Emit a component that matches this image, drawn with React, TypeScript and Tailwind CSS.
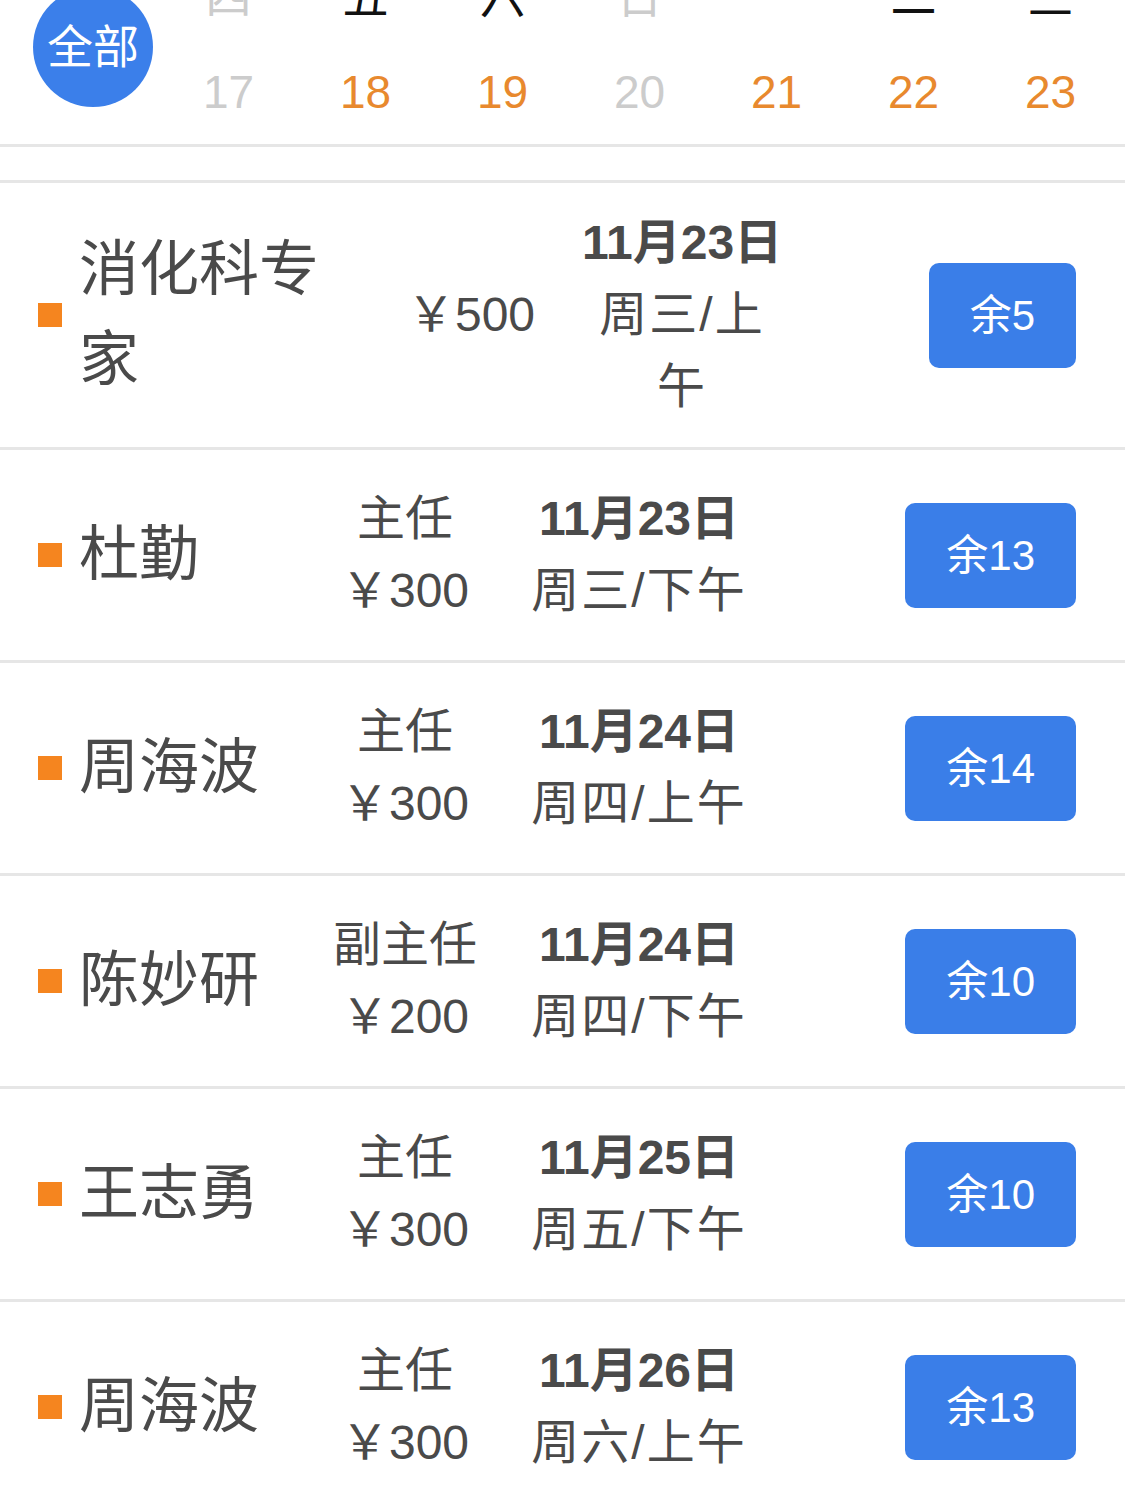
import React from 'react';

// ─── data ─────────────────────────────────────────────────────────────────────

type Day = { week: string; date: string; active: boolean };

const days: Day[] = [
  { week: '四', date: '17', active: false },
  { week: '五', date: '18', active: true },
  { week: '六', date: '19', active: true },
  { week: '日', date: '20', active: false },
  { week: '一', date: '21', active: true },
  { week: '二', date: '22', active: true },
  { week: '三', date: '23', active: true },
];

type Slot = {
  name: string;
  title?: string;
  price: string;
  date: string;
  time: string;
  left: number;
};

const slots: Slot[] = [
  { name: '消化科专家', price: '500', date: '11月23日', time: '周三/上午', left: 5 },
  { name: '杜勤', title: '主任', price: '300', date: '11月23日', time: '周三/下午', left: 13 },
  { name: '周海波', title: '主任', price: '300', date: '11月24日', time: '周四/上午', left: 14 },
  { name: '陈妙研', title: '副主任', price: '200', date: '11月24日', time: '周四/下午', left: 10 },
  { name: '王志勇', title: '主任', price: '300', date: '11月25日', time: '周五/下午', left: 10 },
  { name: '周海波', title: '主任', price: '300', date: '11月26日', time: '周六/上午', left: 13 },
];

const font = { fontFamily: '"Liberation Sans", "Noto Sans CJK SC", sans-serif' };

// ─── components ───────────────────────────────────────────────────────────────

function DayBar() {
  return (
    <div className="h-[147px] overflow-hidden border-b-[3px] border-[#e6e6e6] bg-white">
      <div className="flex items-start -mt-[33px]">
        <div className="ml-[33px] mt-[20px] w-[120px] h-[120px] rounded-full bg-[#3b7fea] flex items-center justify-center text-white text-[46px] shrink-0">
          全部
        </div>
        <div className="ml-[7px] flex">
          {days.map(d => (
            <div key={d.date} className="w-[137px] flex flex-col items-center">
              <div className={`text-[46px] leading-[60px] ${d.active ? 'text-[#111]' : 'text-[#cccccc]'}`}>
                {d.week}
              </div>
              <div className={`mt-[35px] text-[46px] leading-[60px] ${d.active ? 'text-[#e8892e]' : 'text-[#cccccc]'}`}>
                {d.date}
              </div>
            </div>
          ))}
        </div>
      </div>
    </div>
  );
}

function SlotRow({ slot, first }: { slot: Slot; first: boolean }) {
  return (
    <div className="flex items-center min-h-[213px] py-[24px] pl-[38px] pr-[49px] border-b-[3px] border-[#e6e6e6] text-[#4a4a4a]">
      {/* name */}
      <div className={`flex items-center shrink-0 ${first ? 'w-[322px]' : 'w-[262px]'}`}>
        <span className="w-[24px] h-[24px] bg-[#f5851f] shrink-0" />
        <span className="ml-[17px] text-[60px] leading-[90px] min-w-0">{slot.name}</span>
      </div>

      {/* title / price */}
      <div className={`shrink-0 text-center text-[48px] leading-[72px] ${first ? 'w-[222px]' : 'w-[210px]'}`}>
        {slot.title && <div>{slot.title}</div>}
        <div>￥{slot.price}</div>
      </div>

      {/* date */}
      <div className={`shrink-0 text-center text-[48px] leading-[72px] ${first ? 'w-[200px]' : 'w-[258px]'}`}>
        <div className="font-bold whitespace-nowrap">{slot.date}</div>
        <div className="tracking-[2px]">{slot.time}</div>
      </div>

      <button className="ml-auto h-[105px] px-[41px] rounded-[10px] bg-[#3a7ee8] text-white text-[42px] flex items-center shrink-0">
        余{slot.left}
      </button>
    </div>
  );
}

export default function App() {
  return (
    <div className="w-[1125px] min-h-[1500px] bg-white overflow-hidden" style={font}>
      <DayBar />
      <div className="mt-[33px] border-t-[3px] border-[#e6e6e6]">
        {slots.map((s, i) => (
          <SlotRow key={i} slot={s} first={i === 0} />
        ))}
      </div>
    </div>
  );
}
